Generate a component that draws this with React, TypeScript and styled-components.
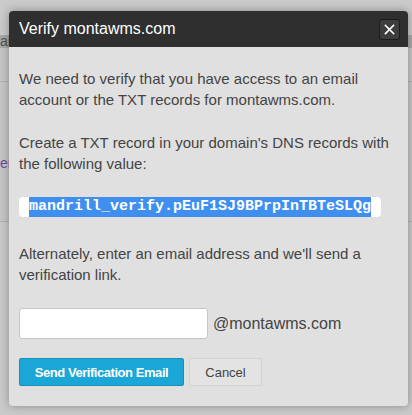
import React from "react";
import styled, { createGlobalStyle } from "styled-components";

const GlobalStyle = createGlobalStyle`
  html, body { margin: 0; padding: 0; }
  body {
    background: #c9c9c9;
    font-family: "Liberation Sans", Arial, sans-serif;
  }
`;

const Page = styled.div`
  position: relative;
  width: 412px;
  height: 415px;
  overflow: hidden;
  background: #cacaca;
`;

const TopStrip = styled.div`
  height: 35px;
`;

const Band = styled.div`
  height: 13px;
  background: #a8a8a8;
  color: #555;
  font-size: 14px;
  line-height: 13px;
  overflow: hidden;
  white-space: nowrap;
`;

const BgRow = styled.div<{ $h: number; $pt?: number }>`
  box-sizing: border-box;
  height: ${(p) => p.$h}px;
  padding-top: ${(p) => p.$pt ?? 0}px;
  border-bottom: 1px solid #b3b3b3;
  background: #c6c6c6;
  font-size: 14px;
  line-height: 16px;
  color: #6a4a9a;
  white-space: nowrap;
  overflow: hidden;
`;

const Overlay = styled.div`
  position: absolute;
  inset: 0;
  padding: 11px 4px 0 9px;
`;

const Dialog = styled.div`
  width: 399px;
  background: #e0e0e0;
  border-radius: 4px;
  overflow: hidden;
  box-shadow: 0 0 10px rgba(0, 0, 0, 0.32);
`;

const Header = styled.div`
  height: 36px;
  background: #2f2f2f;
  display: flex;
  align-items: center;
  justify-content: space-between;
  padding: 0 8px 0 10px;
`;

const Title = styled.h3`
  margin: 0;
  font-weight: normal;
  font-size: 16px;
  color: #ffffff;
`;

const CloseButton = styled.button`
  width: 21px;
  height: 21px;
  padding: 0;
  background: #3d3d3d;
  border: 1px solid #1c1c1c;
  border-radius: 3px;
  display: flex;
  align-items: center;
  justify-content: center;
  cursor: pointer;
`;

const Body = styled.div`
  padding: 21px 10px 20px 10px;
  color: #444;
  font-size: 15px;
  line-height: 21px;
`;

const Para = styled.p<{ $mt?: number }>`
  margin: ${(p) => p.$mt ?? 0}px 0 0 0;
`;

const CodeWrap = styled.div<{ $mt?: number }>`
  margin-top: ${(p) => p.$mt ?? 0}px;
  height: 20px;
  display: flex;
`;

const CodeBox = styled.div`
  background: #ffffff;
  border-radius: 4px;
  padding: 0 10px;
  height: 20px;
`;

const Selected = styled.span`
  display: block;
  background: #3e8ff0;
  color: #ffffff;
  font-family: "Liberation Mono", "Courier New", monospace;
  font-weight: bold;
  font-size: 15px;
  line-height: 20px;
  height: 20px;
`;

const InputRow = styled.div<{ $mt?: number }>`
  margin-top: ${(p) => p.$mt ?? 0}px;
  display: flex;
  align-items: center;
  gap: 5px;
`;

const EmailInput = styled.input`
  box-sizing: border-box;
  width: 189px;
  height: 31px;
  background: #fff;
  border: 1px solid #c6c6c6;
  border-radius: 3px;
  padding: 4px 8px;
  font-size: 14px;
  font-family: inherit;
`;

const Domain = styled.span`
  font-size: 16px;
  color: #444;
`;

const ButtonRow = styled.div<{ $mt?: number }>`
  margin-top: ${(p) => p.$mt ?? 0}px;
  display: flex;
  gap: 5px;
`;

const Button = styled.button<{ $primary?: boolean }>`
  box-sizing: border-box;
  height: 28px;
  padding: 0;
  border-radius: 2px;
  font-family: "Liberation Sans", Arial, sans-serif;
  font-size: 13px;
  cursor: pointer;
  width: ${(p) => (p.$primary ? 165 : 73)}px;
  background: ${(p) => (p.$primary ? "#1aa6d6" : "#e3e3e3")};
  border: 1px solid ${(p) => (p.$primary ? "#1390bd" : "#d2d2d2")};
  color: ${(p) => (p.$primary ? "#ffffff" : "#444")};
  font-weight: ${(p) => (p.$primary ? "bold" : "normal")};
  letter-spacing: ${(p) => (p.$primary ? "-0.45px" : "0")};
`;

export default function App() {
  return (
    <>
      <GlobalStyle />
      <Page>
        <TopStrip />
        <Band>ai</Band>
        <BgRow $h={34} />
        <BgRow $h={140} $pt={73}>eri</BgRow>
        <Overlay>
          <Dialog>
            <Header>
              <Title>Verify montawms.com</Title>
              <CloseButton aria-label="Close">
                <svg width="11" height="11" viewBox="0 0 11 11">
                  <path d="M1.5 1.5 L9.5 9.5 M9.5 1.5 L1.5 9.5" stroke="#fff" strokeWidth="1.7" strokeLinecap="square" />
                </svg>
              </CloseButton>
            </Header>
            <Body>
              <Para>We need to verify that you have access to an email account or the TXT records for montawms.com.</Para>
              <Para $mt={22}>Create a TXT record in your domain's DNS records with the following value:</Para>
              <CodeWrap $mt={23}>
                <CodeBox>
                  <Selected>mandrill_verify.pEuF1SJ9BPrpInTBTeSLQg</Selected>
                </CodeBox>
              </CodeWrap>
              <Para $mt={26}>Alternately, enter an email address and we'll send a verification link.</Para>
              <InputRow $mt={23}>
                <EmailInput type="text" />
                <Domain>@montawms.com</Domain>
              </InputRow>
              <ButtonRow $mt={19}>
                <Button $primary>Send Verification Email</Button>
                <Button>Cancel</Button>
              </ButtonRow>
            </Body>
          </Dialog>
        </Overlay>
      </Page>
    </>
  );
}
